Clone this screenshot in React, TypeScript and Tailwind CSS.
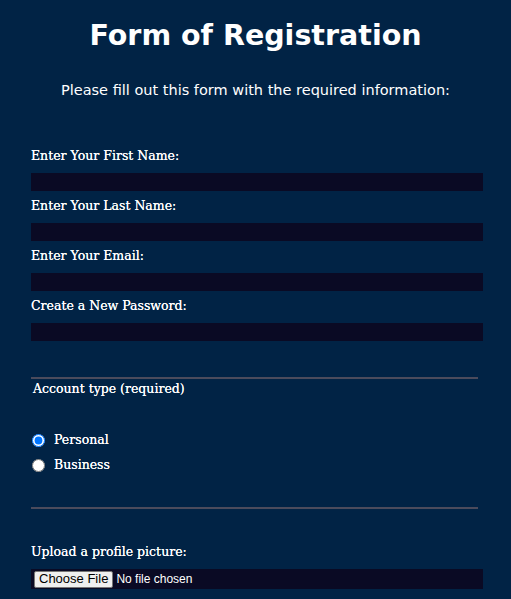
import React from 'react';

const serif = { fontFamily: '"DejaVu Serif", Georgia, serif' };

const fields = [
  { id: 'first', label: 'Enter Your First Name:', type: 'text' },
  { id: 'last', label: 'Enter Your Last Name:', type: 'text' },
  { id: 'email', label: 'Enter Your Email:', type: 'email' },
  { id: 'pass', label: 'Create a New Password:', type: 'password' },
];

export default function App() {
  return (
    <div className="min-h-[599px] w-full bg-[#012345] text-white">
      <h1
        className="pt-[16px] text-center text-[28.5px] font-bold leading-[40px]"
        style={{ fontFamily: '"DejaVu Sans", Verdana, sans-serif' }}
      >
        Form of Registration
      </h1>
      <p
        className="mt-[24px] text-center text-[14.5px] leading-[20px]"
        style={{ fontFamily: '"DejaVu Sans", Verdana, sans-serif' }}
      >
        Please fill out this form with the required information:
      </p>

      <form className="mt-[46px] px-[31px]" style={serif}>
        {fields.map((f, i) => (
          <div key={f.id} className={i === 0 ? '' : 'mt-[5px]'}>
            <label htmlFor={f.id} className="block text-[12.5px] leading-[20px] [text-shadow:0_0_0.4px_#fff]">
              {f.label}
            </label>
            <input
              id={f.id}
              type={f.type}
              className="mt-[7px] block h-[18px] w-[452px] bg-[#0a0a24] text-white outline-none"
            />
          </div>
        ))}

        <div className="mt-[36px] h-[2px] w-[447px] bg-[#4b4b5c]" />
        <div className="ml-[2px] mt-[1px] text-[12.5px] leading-[18px] [text-shadow:0_0_0.4px_#fff]">
          Account type (required)
        </div>

        <div className="mt-[32px] flex flex-col gap-[5px] pl-[1px]">
          <label className="flex h-[20px] items-center gap-[9px] text-[12.5px] [text-shadow:0_0_0.4px_#fff]">
            <input type="radio" name="acct" defaultChecked className="m-0 h-[13px] w-[13px]" />
            Personal
          </label>
          <label className="flex h-[20px] items-center gap-[9px] text-[12.5px] [text-shadow:0_0_0.4px_#fff]">
            <input type="radio" name="acct" className="m-0 h-[13px] w-[13px]" />
            Business
          </label>
        </div>

        <div className="mt-[32px] h-[2px] w-[447px] bg-[#4b4b5c]" />

        <label htmlFor="pic" className="mt-[33px] block text-[12.5px] leading-[20px] [text-shadow:0_0_0.4px_#fff]">
          Upload a profile picture:
        </label>
        <input
          id="pic"
          type="file"
          className="mt-[7px] block h-[20px] w-[452px] bg-[#0a0a24] pl-[3px] text-[12px] leading-[20px] text-white file:mr-[3px] file:mt-[1px] file:h-[17px] file:rounded-[2px] file:border file:border-[#767676] file:bg-[#efefef] file:px-[4px] file:text-[13px] file:leading-[14px] file:text-black"
          style={{ fontFamily: '"Liberation Sans", Arial, sans-serif' }}
        />
      </form>
    </div>
  );
}
